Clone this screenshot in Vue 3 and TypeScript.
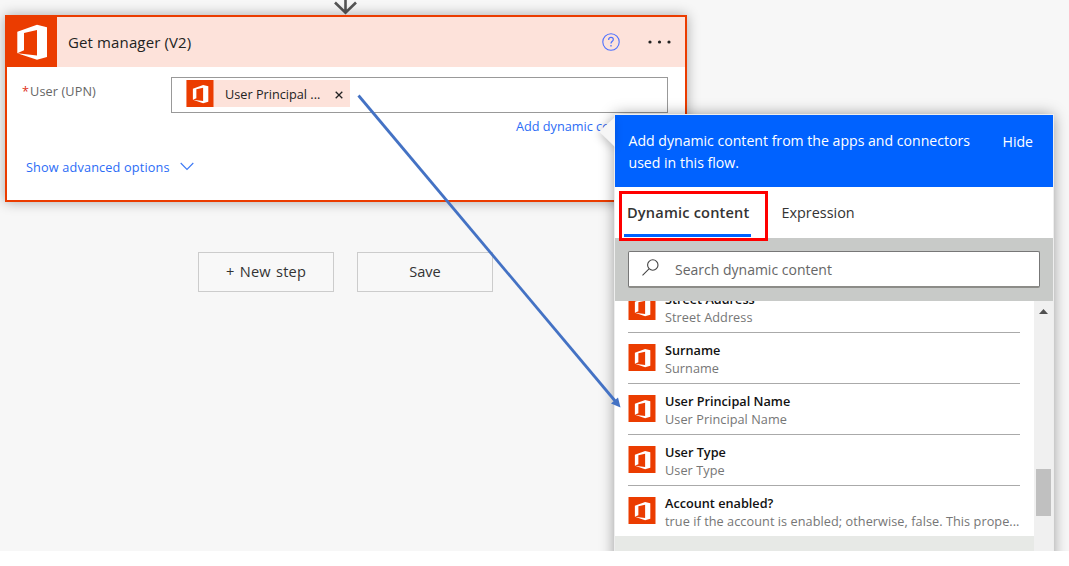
<script setup lang="ts">
import { defineComponent, h } from 'vue'

interface ContentItem {
  title: string
  description: string
}

const items: ContentItem[] = [
  { title: 'Street Address', description: 'Street Address' },
  { title: 'Surname', description: 'Surname' },
  { title: 'User Principal Name', description: 'User Principal Name' },
  { title: 'User Type', description: 'User Type' },
  { title: 'Account enabled?', description: 'true if the account is enabled; otherwise, false. This prope...' },
]

const OfficeLogo = defineComponent({
  setup: () => () =>
    h('svg', { viewBox: '0 0 52 52' }, [
      h('rect', { width: 52, height: 52, fill: '#eb3c00' }),
      h('path', {
        fill: '#fff',
        d: 'M12.3 16.7 L32 9.8 L42 12.2 V42 L32 44.8 L12.3 38.2 L32 40.6 V15 L19 18 V35.2 L12.3 38.2 Z',
      }),
    ]),
})
</script>

<template>
  <div class="canvas">
    <svg class="connector" width="24" height="15" viewBox="0 0 24 15">
      <path d="M12.5 0V13M2 2.5L12.5 12.8L23 2.5" fill="none" stroke="#555" stroke-width="2.6" />
    </svg>

    <section class="card">
      <header class="card-head">
        <OfficeLogo class="card-logo" />
        <h1>Get manager (V2)</h1>
        <svg class="help" width="18" height="18" viewBox="0 0 18 18" fill="none" stroke="#4c6fff">
          <circle cx="9" cy="9" r="8.2" stroke-width="1.1" />
          <path d="M6.7 7V6.4C6.7 5.1 7.6 4.4 9 4.4C10.4 4.4 11.3 5.2 11.3 6.4C11.3 8.3 9 8.3 9 10.6" stroke-width="1.2" />
          <path d="M9 12V13.4" stroke-width="1.3" />
        </svg>
        <svg class="more" width="24" height="4" viewBox="0 0 24 4" fill="#222">
          <circle cx="2" cy="2" r="1.6" /><circle cx="11.5" cy="2" r="1.6" /><circle cx="21" cy="2" r="1.6" />
        </svg>
      </header>
      <div class="field">
        <label><span class="required">*</span>User (UPN)</label>
        <div class="input">
          <div class="token">
            <OfficeLogo class="small-logo" />
            <span class="token-text">User Principal ...</span>
            <svg width="8" height="8" viewBox="0 0 8 8"><path d="M.7 .7L7.3 7.3M7.3 .7L.7 7.3" stroke="#222" stroke-width="1.3" /></svg>
          </div>
        </div>
      </div>
      <a class="add-link">Add dynamic content</a>
      <a class="advanced">
        <span>Show advanced options</span>
        <svg width="14" height="9" viewBox="0 0 14 9"><path d="M.7 1L7 7.5L13.3 1" fill="none" stroke="#3b78f5" stroke-width="1.1" /></svg>
      </a>
    </section>

    <div class="actions">
      <button class="new-step">+ New step</button>
      <button>Save</button>
    </div>

    <aside class="panel">
      <svg class="pointer" width="16" height="30" viewBox="0 0 16 30"><path d="M16 0L0 14.5L16 30Z" fill="#f6f6f6" /></svg>
      <header class="panel-head">
        <p>Add dynamic content from the apps and connectors<br />used in this flow.</p>
        <a>Hide</a>
      </header>
      <nav class="tabs">
        <span class="tab active">Dynamic content</span>
        <span class="tab">Expression</span>
      </nav>
      <div class="search-area">
        <div class="search">
          <svg width="17" height="17" viewBox="0 0 17 17" fill="none" stroke="#444" stroke-width="1.1">
            <circle cx="10.8" cy="6" r="5.2" /><path d="M7 9.8L.5 16.3" />
          </svg>
          <span>Search dynamic content</span>
        </div>
      </div>
      <div class="list-area">
        <div class="list">
          <div v-for="item in items" :key="item.title" class="row">
            <OfficeLogo class="small-logo" />
            <div class="row-text">
              <div class="title">{{ item.title }}</div>
              <div class="description">{{ item.description }}</div>
            </div>
          </div>
          <div class="group-gap"></div>
        </div>
        <div class="scrollbar">
          <svg width="9" height="5" viewBox="0 0 9 5"><path d="M0 5L4.5 0L9 5Z" fill="#505050" /></svg>
          <div class="thumb"></div>
        </div>
      </div>
    </aside>

    <svg class="annotation" width="1069" height="551" viewBox="0 0 1069 551">
      <path d="M358.5 95.5L616 402" stroke="#4472c4" stroke-width="2.8" fill="none" />
      <path d="M620.5 407.5L611 403.5L618 397.5Z" fill="#4472c4" />
      <rect x="620.5" y="192.5" width="146" height="47" fill="none" stroke="#f00" stroke-width="3" />
    </svg>
  </div>
</template>

<style>
body {
  margin: 0;
  background: #fff;
}
</style>

<style scoped>
.canvas {
  position: relative;
  width: 1069px;
  height: 551px;
  overflow: hidden;
  background: #f7f7f7;
  font-family: 'Open Sans', 'Noto Sans', sans-serif;
  font-size: 12.7px;
  color: #333;
}
.canvas * {
  box-sizing: border-box;
}
.connector {
  position: absolute;
  left: 333px;
  top: 0;
}
.card {
  position: absolute;
  left: 5px;
  top: 15px;
  width: 682px;
  height: 187px;
  border: 2px solid #eb3c00;
  background: #fff;
  box-shadow: 0 0 12px rgba(0, 0, 0, 0.32);
}
.card-head {
  display: flex;
  align-items: center;
  height: 50px;
  padding-right: 13px;
  background: #fde2da;
}
.card-logo {
  width: 52px;
  height: 52px;
  margin: -2px 0 0 -2px;
}
h1 {
  flex: 1;
  margin: 0 0 0 11px;
  font-size: 15px;
  letter-spacing: 0.13px;
  font-weight: 400;
  color: #222;
}
.help {
  margin-right: 28px;
}
.field {
  display: flex;
  padding: 10px 17px 0 15px;
}
label {
  width: 149px;
  padding-top: 5px;
  line-height: 19px;
  letter-spacing: 0.1px;
  color: #666;
}
.required {
  margin-right: 1px;
  color: #e03020;
}
.input {
  flex: 1;
  height: 36px;
  padding: 2px 15px 2px 14px;
  border: 1px solid #999;
}
.token {
  display: flex;
  align-items: center;
  width: 164px;
  height: 27px;
  background: #fde2da;
  color: #222;
}
.token svg:last-child {
  margin-top: 2px;
}
.token-text {
  width: 110px;
  margin: 0 0 0 11px;
}
.small-logo {
  flex: none;
  width: 28px;
  height: 27px;
}
.add-link {
  display: block;
  margin: 4px 0 0 509px;
  line-height: 18px;
  white-space: nowrap;
  color: #2b6cf6;
}
.advanced {
  display: flex;
  align-items: center;
  gap: 10px;
  margin: 22px 0 0 19px;
  line-height: 20px;
  letter-spacing: 0.16px;
  color: #2b6cf6;
}
.advanced svg {
  margin-top: -2px;
}
.actions {
  display: flex;
  gap: 23px;
  padding: 252px 0 0 198px;
}
button {
  width: 136px;
  height: 40px;
  padding: 0 0 2px;
  border: 1px solid #ccc;
  background: #f8f8f8;
  font: 14.6px 'Open Sans', 'Noto Sans', sans-serif;
  color: #333;
}
.new-step {
  word-spacing: 1.4px;
  letter-spacing: 0.15px;
}
.panel {
  position: absolute;
  left: 615px;
  top: 115px;
  width: 438px;
  height: 470px;
  background: #fff;
  box-shadow: 0 0 0 1px #eee, 0 0 14px rgba(0, 0, 0, 0.42);
}
.pointer {
  position: absolute;
  left: -16px;
  top: 2px;
  filter: drop-shadow(-1px 2px 4px rgba(0, 0, 0, 0.2));
}
.panel-head {
  display: flex;
  justify-content: space-between;
  height: 72px;
  padding: 15px 20px 0 13.5px;
  background: #0062ff;
  color: #fff;
  font-size: 14.1px;
  line-height: 22.4px;
  white-space: nowrap;
}
.panel-head p {
  margin: 0;
}
.panel-head a {
  margin-top: 1px;
}
.tabs {
  display: flex;
  gap: 27.5px;
  height: 51px;
  padding-left: 9px;
  font-size: 14.4px;
  line-height: 51px;
}
.tab {
  padding: 0 2px 0 3px;
}
.active {
  width: 127px;
  height: 50px;
  border-bottom: 3px solid #0062ff;
  font-size: 14.6px;
  letter-spacing: 0.17px;
  font-weight: 600;
  white-space: nowrap;
}
.search-area {
  height: 63px;
  padding: 13px 13px 0 13px;
  background: #c8cac8;
}
.search {
  display: flex;
  align-items: center;
  gap: 16px;
  height: 37px;
  padding-left: 13px;
  border: 1px solid #777;
  border-bottom: 2px solid #8c8c88;
  border-radius: 2px;
  background: #fff;
  font-size: 14px;
  color: #666;
}
.search svg {
  margin-top: -3px;
}
.list-area {
  display: flex;
  height: 250px;
  overflow: hidden;
}
.list {
  width: 419px;
  margin-top: -19px;
}
.row {
  display: flex;
  height: 51px;
  margin: 0 14px 0 13px;
  padding-top: 11px;
  border-bottom: 1px solid #aaa;
}
.row:nth-child(5) {
  border-bottom-color: transparent;
}
.row-text {
  margin: -3px 0 0 9px;
  line-height: 18px;
  white-space: nowrap;
}
.title {
  font-weight: 600;
  color: #111;
}
.description {
  letter-spacing: 0.06px;
  color: #767676;
}
.group-gap {
  height: 40px;
  margin-top: -1px;
  background: #e7e9e6;
}
.scrollbar {
  display: flex;
  flex-direction: column;
  align-items: center;
  width: 19px;
  padding-top: 8px;
  background: #f0f0f0;
}
.thumb {
  width: 15px;
  height: 47px;
  margin-top: 155px;
  background: #c0c0c0;
}
.annotation {
  position: absolute;
  left: 0;
  top: 0;
}
</style>
